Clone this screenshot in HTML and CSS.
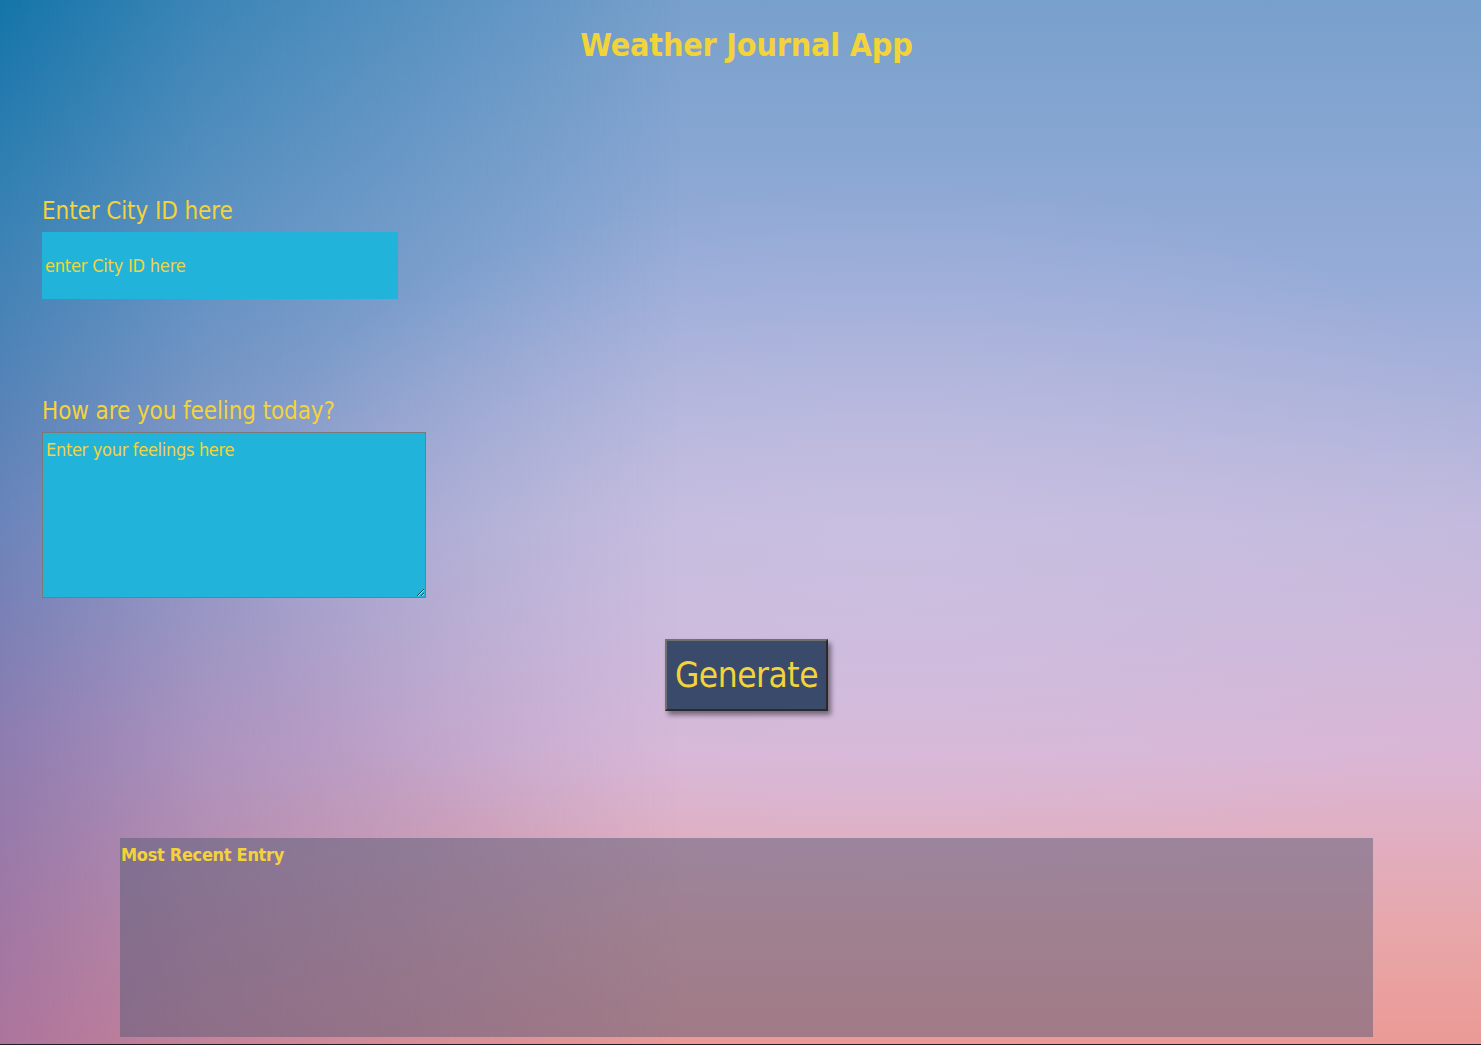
FILE: index.html
```html
<!DOCTYPE html>
<html lang="en">
<head>
<meta charset="utf-8">
<title>Weather Journal App</title>
<link rel="stylesheet" href="styles.css">
</head>
<body>
<div class="app">
  <h1 class="title">Weather Journal App</h1>
  <main class="form">
    <div class="field field-zip">
      <label class="label" for="zip">Enter City ID here</label>
      <input class="zip-input" id="zip" type="text" placeholder="enter City ID here">
    </div>
    <div class="field field-feel">
      <label class="label" for="feelings">How are you feeling today?</label>
      <textarea class="feel-input" id="feelings" placeholder="Enter your feelings here"></textarea>
    </div>
    <div class="actions">
      <button class="generate" type="button">Generate</button>
    </div>
  </main>
  <section class="entry">
    <div class="entry-title">Most Recent Entry</div>
  </section>
</div>
</body>
</html>
```

FILE: styles.css
```css
html {
  background: #1e1e24;
  margin: 0;
  padding: 0;
}

body {
  margin: 0;
  height: 1044px;
  overflow: hidden;
  position: relative;
  font-family: "DejaVu Sans Condensed", "DejaVu Sans", sans-serif;
  color: #f3d33a;
  background: linear-gradient(180deg, #78a0cc 0%, #98acd8 28%, #c2badd 50%, #dab6d6 72%, #e8a6a8 90%, #eb9a95 100%);
}

body::before {
  content: "";
  position: absolute;
  inset: 0;
  background: linear-gradient(180deg, #1474a8 0%, #3a82b4 22%, #6a84ba 50%, #8c7cb0 70%, #ac749c 100%);
  -webkit-mask-image: linear-gradient(90deg, #000 0%, rgba(0,0,0,0.6) 14%, transparent 46%);
  mask-image: linear-gradient(90deg, #000 0%, rgba(0,0,0,0.6) 14%, transparent 46%);
  pointer-events: none;
}

body::after {
  content: "";
  position: absolute;
  inset: 0;
  background: radial-gradient(ellipse 45% 35% at 60% 52%, rgba(205, 195, 228, 0.55), rgba(205, 195, 228, 0) 100%);
  pointer-events: none;
}

.app {
  position: relative;
  z-index: 1;
  display: flex;
  flex-direction: column;
}

.title {
  margin: 20px 0 0;
  text-align: center;
  font-size: 32px;
  font-weight: bold;
  line-height: 50px;
  letter-spacing: -0.2px;
  padding-left: 12px;
}

.form {
  display: flex;
  flex-direction: column;
  padding-left: 42px;
}

.field {
  display: flex;
  flex-direction: column;
  align-items: flex-start;
}

.field-zip {
  margin-top: 120px;
}

.field-feel {
  margin-top: 91px;
}

.label {
  font-size: 24px;
  line-height: 42px;
  letter-spacing: -0.1px;
}

.zip-input {
  box-sizing: border-box;
  width: 356px;
  height: 67px;
  margin: 0;
  border: none;
  padding: 0 3px;
  background: #22b3da;
  color: #f3d33a;
  font-family: "DejaVu Sans Condensed", "DejaVu Sans", sans-serif;
  font-size: 18px;
  letter-spacing: -0.2px;
  outline: none;
}

.zip-input::placeholder {
  color: #f3d33a;
  opacity: 1;
}

.feel-input {
  box-sizing: border-box;
  width: 384px;
  height: 166px;
  margin: 0;
  border: 1px solid #7a7a7a;
  padding: 6px 3px;
  background: #22b3da;
  color: #f3d33a;
  font-family: "DejaVu Sans Condensed", "DejaVu Sans", sans-serif;
  font-size: 18px;
  letter-spacing: -0.3px;
  outline: none;
}

.feel-input::placeholder {
  color: #f3d33a;
  opacity: 1;
}

.actions {
  display: flex;
  justify-content: center;
  margin-top: 41px;
  padding-right: 30px;
}

.generate {
  box-sizing: border-box;
  width: 163px;
  height: 72px;
  margin: 0;
  padding: 0;
  background: #3a4a6b;
  color: #f3d33a;
  border: 2px solid;
  border-color: #707070 #2a2a2a #2a2a2a #707070;
  box-shadow: 3px 4px 5px rgba(0, 0, 0, 0.45);
  font-family: "DejaVu Sans Condensed", "DejaVu Sans", sans-serif;
  font-size: 35px;
  letter-spacing: -0.5px;
  cursor: pointer;
}

.entry {
  box-sizing: border-box;
  margin: 127px 0 0 120px;
  width: 1253px;
  height: 199px;
  padding: 2px 1px;
  background: rgba(88, 90, 118, 0.5);
}

.entry-title {
  font-size: 18px;
  font-weight: bold;
  line-height: 30px;
  letter-spacing: -0.3px;
}
```
